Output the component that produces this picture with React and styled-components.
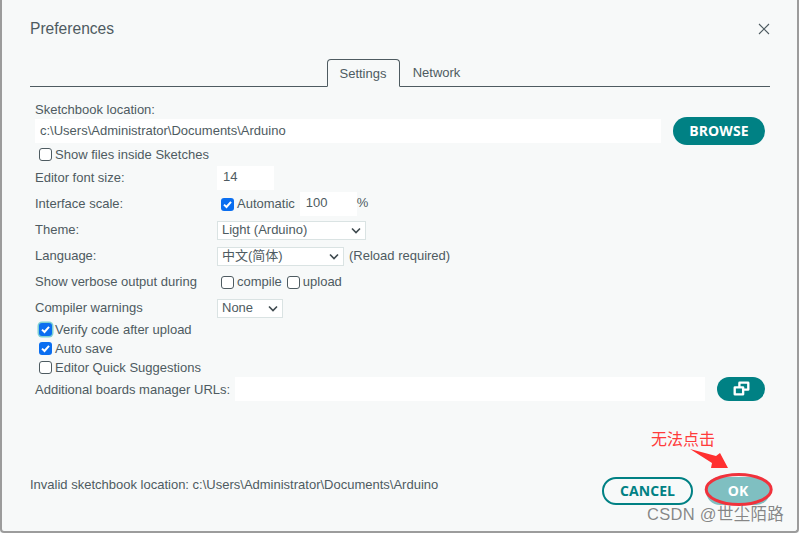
import React from "react";
import styled, { createGlobalStyle } from "styled-components";

const Global = createGlobalStyle`
  html, body { margin: 0; padding: 0; background: #f7f9f9; }
  * { box-sizing: border-box; }
  #root { width: 799px; height: 533px; overflow: hidden; }
`;

const Dialog = styled.div`
  position: relative;
  width: 799px;
  height: 533px;
  background: #f7f9f9;
  border-left: 2px solid #9c9c9c;
  border-right: 2px solid #9c9c9c;
  border-bottom: 2px solid #9c9c9c;
  border-bottom-left-radius: 4px;
  border-bottom-right-radius: 4px;
  padding: 0 27px 0 28px;
  font-family: "Liberation Sans", "Noto Sans CJK SC", sans-serif;
  font-size: 13px;
  color: #4e5b61;
  display: flex;
  flex-direction: column;
`;

const Header = styled.div`
  height: 59px;
  padding-top: 18px;
  display: flex;
  justify-content: space-between;
  align-items: flex-start;
`;

const Title = styled.div`
  font-size: 15.6px;
  line-height: 21px;
  color: #4e5b61;
`;

const Close = styled.svg`
  width: 12px;
  height: 12px;
  margin: 5px 0 0 0;
`;

const TabBar = styled.div`
  height: 28px;
  display: flex;
  justify-content: center;
  border-bottom: 1px solid #4e5b61;
`;

const Tab = styled.div`
  height: ${p => (p.$active ? "28px" : "27px")};
  width: ${p => (p.$active ? "73px" : "74px")};
  display: flex;
  align-items: center;
  justify-content: center;
  color: #4e5b61;
  background: #f7f9f9;
  ${p => p.$active && `
    border: 1px solid #4e5b61;
    border-bottom: 1px solid #f7f9f9;
    border-radius: 4px 4px 0 0;
  `}
`;

const Content = styled.div`
  padding: 0 5px;
  display: flex;
  flex-direction: column;
`;

const Label = styled.div`
  line-height: 16px;
  white-space: nowrap;
`;

const SketchLabel = styled(Label)`
  margin-top: 14px;
  height: 17px;
  display: flex;
  align-items: center;
`;

const UrlLabel = styled(Label)`
  margin-top: 2px;
`;

const PathRow = styled.div`
  display: flex;
  align-items: center;
  height: 28px;
  margin-top: -1px;
  gap: 12px;
`;

const TextField = styled.div`
  background: #fff;
  height: 24px;
  line-height: 24px;
  padding-left: 5px;
  flex: 1;
  white-space: nowrap;
`;

const NumberField = styled.div`
  background: #fff;
  height: 24px;
  line-height: 22px;
  padding-left: 6px;
  width: 57px;
  flex: none;
  margin-left: ${p => p.$left || 0}px;
`;

const Percent = styled.span`
  line-height: 16px;
  padding-bottom: 3px;
`;

const Pill = styled.button`
  font-family: "Open Sans", "Liberation Sans", sans-serif;
  font-weight: 700;
  font-size: 14px;
  letter-spacing: 0.1px;
  border-radius: 14px;
  height: ${p => p.$h || 28}px;
  width: ${p => p.$w}px;
  margin-left: ${p => p.$left || 0}px;
  display: flex;
  align-items: center;
  justify-content: center;
  padding: 0 0 1px;
  flex: none;
  border: ${p => (p.$outline ? "2px solid #008184" : "none")};
  background: ${p => (p.$outline ? "#f7f9f9" : p.$faded ? "#7fbfc1" : "#008184")};
  color: ${p => (p.$outline ? "#008184" : "#fff")};
`;

const CheckLine = styled.div`
  display: flex;
  align-items: center;
  height: ${p => p.$h || 19}px;
  padding-left: 4px;
  gap: 3px;
  white-space: nowrap;
  margin-top: ${p => p.$top || 0}px;
`;

const Box = styled.span`
  width: 13px;
  height: 13px;
  flex: none;
  border-radius: 3px;
  border: ${p => (p.$on ? "none" : "1px solid #4e5b61")};
  background: ${p => (p.$on ? "#0a6ef0" : "#fff")};
  display: flex;
  align-items: center;
  justify-content: center;
  box-shadow: ${p => (p.$focus ? "0 0 0 1.5px #7ed0d2" : "none")};
`;

const CheckMark = styled.svg`
  width: 11px;
  height: 11px;
`;

const Row = styled.div`
  display: grid;
  grid-template-columns: 182px 1fr;
  align-items: center;
  height: 26px;
  margin-top: ${p => p.$top || 0}px;
`;

const Controls = styled.div`
  display: flex;
  align-items: center;
  white-space: nowrap;
  line-height: 16px;
  gap: ${p => p.$gap || 0}px;
`;

const Inline = styled.label`
  display: flex;
  align-items: center;
  gap: 3px;
`;

const CheckArea = styled.div`
  padding-left: 4px;
  display: flex;
  align-items: center;
`;

const SelectWrap = styled.div`
  position: relative;
  width: ${p => p.$w}px;
  height: 19px;
  flex: none;
`;

const Select = styled.select`
  appearance: none;
  width: 100%;
  height: 100%;
  background: #fff;
  border: 1px solid #dae3e3;
  font: inherit;
  color: #4e5b61;
  padding: 0 0 1px 4px;
  border-radius: 0;
`;

const Chevron = styled.svg`
  position: absolute;
  right: 5px;
  top: 6px;
  width: 10px;
  height: 7px;
  pointer-events: none;
`;

const UrlRow = styled.div`
  display: flex;
  align-items: center;
  height: 24px;
  gap: 5px;
`;

const CopyIcon = styled.svg`
  width: 17px;
  height: 15px;
`;

const Footer = styled.div`
  margin-top: auto;
  height: 54px;
  display: flex;
  align-items: flex-start;
  justify-content: space-between;
`;

const Status = styled.div`
  line-height: 16px;
`;

const FooterButtons = styled.div`
  display: flex;
  gap: 13px;
`;

/* annotation painted over the screenshot */
const Note = styled.div`
  position: absolute;
  left: 649px;
  top: 428px;
  font-family: "Noto Sans CJK SC", sans-serif;
  font-size: 16px;
  line-height: 20px;
  color: #ff3b3b;
`;

const Overlay = styled.svg`
  position: absolute;
  left: 0;
  top: 0;
  width: 797px;
  height: 531px;
  pointer-events: none;
`;

const Watermark = styled.div`
  position: absolute;
  left: 645px;
  top: 504px;
  font-family: "Liberation Sans", "Noto Sans CJK SC", sans-serif;
  font-size: 16.5px;
  letter-spacing: 0.3px;
  line-height: 20px;
  color: rgba(90, 90, 90, 0.72);
  white-space: nowrap;
`;

const Check = ({ on, focus }) => (
  <Box $on={on} $focus={focus}>
    {on && (
      <CheckMark viewBox="0 0 11 11">
        <path d="M2 5.6 L4.5 8 L9 2.8" fill="none" stroke="#fff" strokeWidth="2" />
      </CheckMark>
    )}
  </Box>
);

const Drop = ({ w, value }) => (
  <SelectWrap $w={w}>
    <Select defaultValue={value}>
      <option>{value}</option>
    </Select>
    <Chevron viewBox="0 0 10 7">
      <path d="M1 1.5 L5 5.5 L9 1.5" fill="none" stroke="#3f4a4f" strokeWidth="1.6" />
    </Chevron>
  </SelectWrap>
);

export default function App() {
  return (
    <>
      <Global />
      <Dialog>
        <Header>
          <Title>Preferences</Title>
          <Close viewBox="0 0 12 12">
            <path d="M1 1 L11 11 M11 1 L1 11" stroke="#4e5b61" strokeWidth="1.1" fill="none" />
          </Close>
        </Header>
        <TabBar>
          <Tab $active>Settings</Tab>
          <Tab>Network</Tab>
        </TabBar>
        <Content>
          <SketchLabel>Sketchbook location:</SketchLabel>
          <PathRow>
            <TextField>c:\Users\Administrator\Documents\Arduino</TextField>
            <Pill $w={92}>BROWSE</Pill>
          </PathRow>
          <CheckLine $h={18}>
            <Check />
            Show files inside Sketches
          </CheckLine>
          <Row $top={2}>
            <Label>Editor font size:</Label>
            <Controls>
              <NumberField>14</NumberField>
            </Controls>
          </Row>
          <Row>
            <Label>Interface scale:</Label>
            <Controls>
              <CheckArea>
                <Inline>
                  <Check on />
                  Automatic
                </Inline>
              </CheckArea>
              <NumberField $left={5}>100</NumberField>
              <Percent>%</Percent>
            </Controls>
          </Row>
          <Row>
            <Label>Theme:</Label>
            <Controls>
              <Drop w={149} value="Light (Arduino)" />
            </Controls>
          </Row>
          <Row>
            <Label>Language:</Label>
            <Controls $gap={5}>
              <Drop w={127} value="中文(简体)" />
              <span>(Reload required)</span>
            </Controls>
          </Row>
          <Row>
            <Label>Show verbose output during</Label>
            <Controls $gap={5}>
              <CheckArea>
                <Inline>
                  <Check />
                  compile
                </Inline>
              </CheckArea>
              <Inline>
                <Check />
                upload
              </Inline>
            </Controls>
          </Row>
          <Row>
            <Label>Compiler warnings</Label>
            <Controls>
              <Drop w={66} value="None" />
            </Controls>
          </Row>
          <CheckLine $top={-1}>
            <Check on focus />
            Verify code after upload
          </CheckLine>
          <CheckLine>
            <Check on />
            Auto save
          </CheckLine>
          <CheckLine>
            <Check />
            Editor Quick Suggestions
          </CheckLine>
          <UrlRow>
            <UrlLabel>Additional boards manager URLs:</UrlLabel>
            <TextField />
            <Pill $w={48} $h={24} $left={7}>
              <CopyIcon viewBox="0 0 18 16">
                <path
                  fillRule="evenodd"
                  fill="#fff"
                  d="M7 0.5 H16 a1.5 1.5 0 0 1 1.5 1.5 V9 a1.5 1.5 0 0 1 -1.5 1.5 H12 V14 a1.5 1.5 0 0 1 -1.5 1.5 H2 a1.5 1.5 0 0 1 -1.5 -1.5 V7 a1.5 1.5 0 0 1 1.5 -1.5 H5.5 V2 a1.5 1.5 0 0 1 1.5 -1.5 Z M8 3 V5.5 H10.5 a1.5 1.5 0 0 1 1.5 1.5 V8 H15 V3 Z M3 8 V13 H9.5 V8 Z"
                />
              </CopyIcon>
            </Pill>
          </UrlRow>
        </Content>
        <Footer>
          <Status>Invalid sketchbook location: c:\Users\Administrator\Documents\Arduino</Status>
          <FooterButtons>
            <Pill $outline $w={91}>CANCEL</Pill>
            <Pill $faded $w={64}>OK</Pill>
          </FooterButtons>
        </Footer>
        <Note>无法点击</Note>
        <Overlay viewBox="0 0 797 531">
          <ellipse cx="736.7" cy="489.5" rx="32.5" ry="15" fill="none" stroke="#f0323c" strokeWidth="3" />
          <path d="M688 449 L714 456 L718 453 L726 468 L709 468 L710 463 Z" fill="#ff3030" />
        </Overlay>
        <Watermark>CSDN @世尘陌路</Watermark>
      </Dialog>
    </>
  );
}
